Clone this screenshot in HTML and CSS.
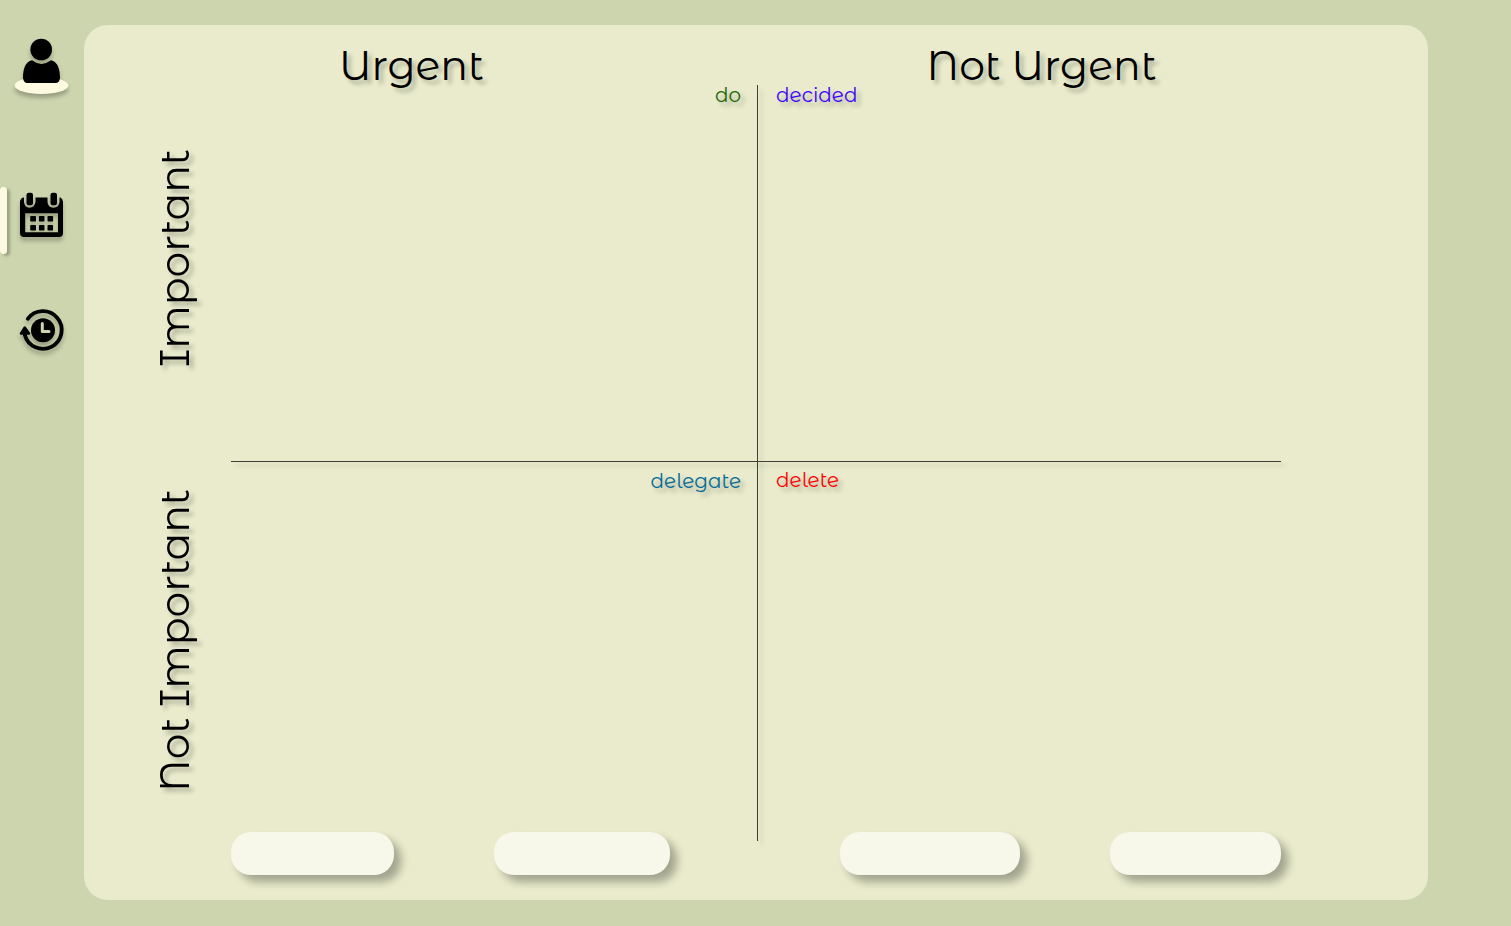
FILE: index.html
```html
<!DOCTYPE html>
<html lang="en">
<head>
<meta charset="utf-8">
<meta name="viewport" content="width=device-width, initial-scale=1">
<title>Priority matrix</title>
<link rel="stylesheet" href="styles.css">
</head>
<body>
<div class="app">
  <nav class="sidebar" aria-label="Main">
    <a class="nav-link profile" href="#profile" aria-label="Profile">
      <svg width="54" height="64" viewBox="0 0 54 64" aria-hidden="true">
        <ellipse class="plate" cx="26.500" cy="50.500" rx="26.800" ry="8.500"/>
        <circle cx="26.200" cy="14.500" r="10.800"/>
        <path d="M17 25.300 Q26.500 32.500 36 25.300 C43 26.500 45 35 45 43 Q44.500 48 40.500 48 H12.500 Q8.500 48 8 43 C8 35 10 26.500 17 25.300Z"/>
      </svg>
    </a>
    <a class="nav-link current" href="#calendar" aria-label="Calendar" aria-current="page">
      <svg width="44" height="46" viewBox="0 0 44 46" aria-hidden="true">
        <path fill-rule="evenodd" d="M3 5.500H4V10Q4.500 15.700 9.500 15.700T15.500 10V5.500H27.500V10Q28 15.700 33.500 15.700T39.500 10V5.500H40.500Q43 7 43 10V41Q43 45 39 45H4Q0 45 0 41V10Q0 7 3 5.500ZM5.200 21.300V40.300H38V21.300Z"/>
        <rect x="6.500" y=".800" width="6.500" height="12.500" rx="2.300"/>
        <rect x="30.500" y=".800" width="6.500" height="12.500" rx="2.300"/>
        <path d="M11 24h4.200q.800 0 .800.800v4q0 .800-.800.800H11q-.800 0-.800-.800v-4q0-.800.800-.800zM19.700 24h4q.800 0 .800.800v4q0 .800-.800.800h-4q-.800 0-.800-.800v-4q0-.800.800-.800zM28.300 24h4q.800 0 .800.800v4q0 .800-.800.800h-4q-.800 0-.800-.800v-4q0-.800.800-.800zM11 33h4.200q.800 0 .800.800v4q0 .800-.800.800H11q-.800 0-.800-.800v-4q0-.800.800-.800zM19.700 33h4q.800 0 .800.800v4q0 .800-.800.800h-4q-.800 0-.800-.800v-4q0-.800.800-.800zM28.300 33h4q.800 0 .800.800v4q0 .800-.800.800h-4q-.800 0-.800-.800v-4q0-.800.800-.800z"/>
      </svg>
    </a>
    <a class="nav-link history" href="#history" aria-label="History">
      <svg width="46" height="44" viewBox="0 0 46 44" aria-hidden="true">
        <path d="M8.800 10.800A18.800 18.800 0 1 1 5.800 27" fill="none" stroke="#000" stroke-width="3.800" stroke-linecap="round"/>
        <path d="M5.800 19.500L10 25.500H2Z" stroke="#000" stroke-width="2.500" stroke-linejoin="round"/>
        <circle cx="24" cy="22.200" r="12"/>
        <path class="hands" d="M23.300 15.500V23.500H30"/>
      </svg>
    </a>
  </nav>
  <main class="panel">
    <h2 class="column-title title-urgent">Urgent</h2>
    <h2 class="column-title title-not-urgent">Not Urgent</h2>
    <h2 class="row-title row-important"><span>Important</span></h2>
    <h2 class="row-title row-not-important"><span>Not Important</span></h2>
    <div class="matrix">
      <section class="quadrant left do">do</section>
      <section class="quadrant decided">decided</section>
      <section class="quadrant left delegate">delegate</section>
      <section class="quadrant delete">delete</section>
    </div>
    <div class="actions">
      <div class="action-pair first">
        <button class="action small" type="button" aria-label="Do"></button>
        <button class="action large" type="button" aria-label="Delegate"></button>
      </div>
      <div class="action-pair second">
        <button class="action wide" type="button" aria-label="Decide"></button>
        <button class="action medium" type="button" aria-label="Delete"></button>
      </div>
    </div>
  </main>
</div>
</body>
</html>
```
FILE: styles.css
```css
* { box-sizing: border-box; }

body {
  margin: 0;
  background: #cdd5ae;
  color: #000;
  font-family: "Montserrat Alternates", Inter, "Liberation Sans", sans-serif;
}

.app {
  display: flex;
  min-height: 100vh;
  padding: 25px 83px 26px 0;
}

.sidebar {
  display: flex;
  flex-direction: column;
  flex: 0 0 84px;
  padding-top: 8px;
}

.nav-link {
  position: relative;
  display: flex;
  justify-content: center;
  align-items: center;
  height: 68px;
}

.nav-link svg {
  display: block;
  overflow: visible;
  filter: drop-shadow(0 4px 2px rgba(0, 0, 0, 0.25));
}

.plate { fill: #fef9e1; }

.hands {
  fill: none;
  stroke: #cdd5ae;
  stroke-width: 3;
  stroke-linecap: round;
  stroke-linejoin: round;
}

.current {
  height: 67px;
  margin-top: 86px;
  padding-bottom: 12px;
}

.current::before {
  content: "";
  position: absolute;
  left: 0;
  top: 0;
  width: 7px;
  height: 67px;
  border-radius: 4px;
  background: #fef9e1;
  box-shadow: 3px 2px 3px rgba(0, 0, 0, 0.25);
}

.history { margin-top: 42px; }

.panel {
  display: grid;
  flex: 1;
  grid-template-columns: 147px 1fr 1fr 147px;
  grid-template-rows: 60px 1fr 1fr auto;
  padding-bottom: 25px;
  border-radius: 24px;
  background: #e9ebcc;
}

.column-title,
.row-title {
  margin: 0;
  font-size: 41px;
  font-weight: 400;
  line-height: 48px;
  white-space: nowrap;
}

.column-title {
  padding-top: 16px;
  text-align: center;
  text-shadow: 4px 4px 4px rgba(0, 0, 0, 0.25);
}

.title-urgent { grid-area: 1 / 2; padding-right: 164px; }
.title-not-urgent { grid-area: 1 / 3; padding-left: 46px; }

.row-title {
  display: flex;
  justify-content: center;
  align-items: center;
  padding-left: 32px;
  filter: drop-shadow(4px 4px 2px rgba(0, 0, 0, 0.25));
}

.row-title span {
  writing-mode: vertical-rl;
  transform: rotate(180deg);
}

.row-important { grid-area: 2 / 1; padding-bottom: 32px; }
.row-not-important { grid-area: 3 / 1; padding-bottom: 22px; }

.matrix {
  position: relative;
  grid-area: 2 / 2 / 4 / 4;
  display: grid;
  grid-template-columns: 1fr 1fr;
  grid-template-rows: 1fr 1fr;
}

.matrix::before,
.matrix::after {
  content: "";
  position: absolute;
  background: #3e3f37;
  box-shadow: 4px 4px 4px rgba(0, 0, 0, 0.2);
}

.matrix::before { top: 0; bottom: 0; left: calc(50% + 1px); width: 1px; }
.matrix::after { left: 0; right: 0; top: calc(50% - 2px); height: 1px; }

.quadrant {
  padding: 0 20px;
  font-size: 20px;
  line-height: 20px;
  text-shadow: 4px 4px 4px rgba(0, 0, 0, 0.25);
}

.left { padding-right: 15px; text-align: right; }
.do { color: #206606; }
.decided { color: #3d00ff; }
.delegate { padding-top: 8px; color: #006a98; }
.delete { padding-top: 7px; color: #ff0000; }

.actions {
  grid-area: 4 / 2 / 5 / 4;
  display: grid;
  grid-template-columns: 1fr 1fr;
  margin-top: -9px;
}

.action-pair { display: flex; justify-content: space-between; }
.first { padding-right: 86px; }
.second { padding-left: 84px; }

.action {
  height: 43px;
  padding: 0;
  border: 0;
  border-radius: 20px;
  background: #f7f7ea;
  box-shadow: 7px 7px 8px rgba(0, 0, 0, 0.3);
  cursor: pointer;
}

.small { width: 163px; }
.medium { width: 171px; }
.large { width: 176px; }
.wide { width: 180px; }
```
